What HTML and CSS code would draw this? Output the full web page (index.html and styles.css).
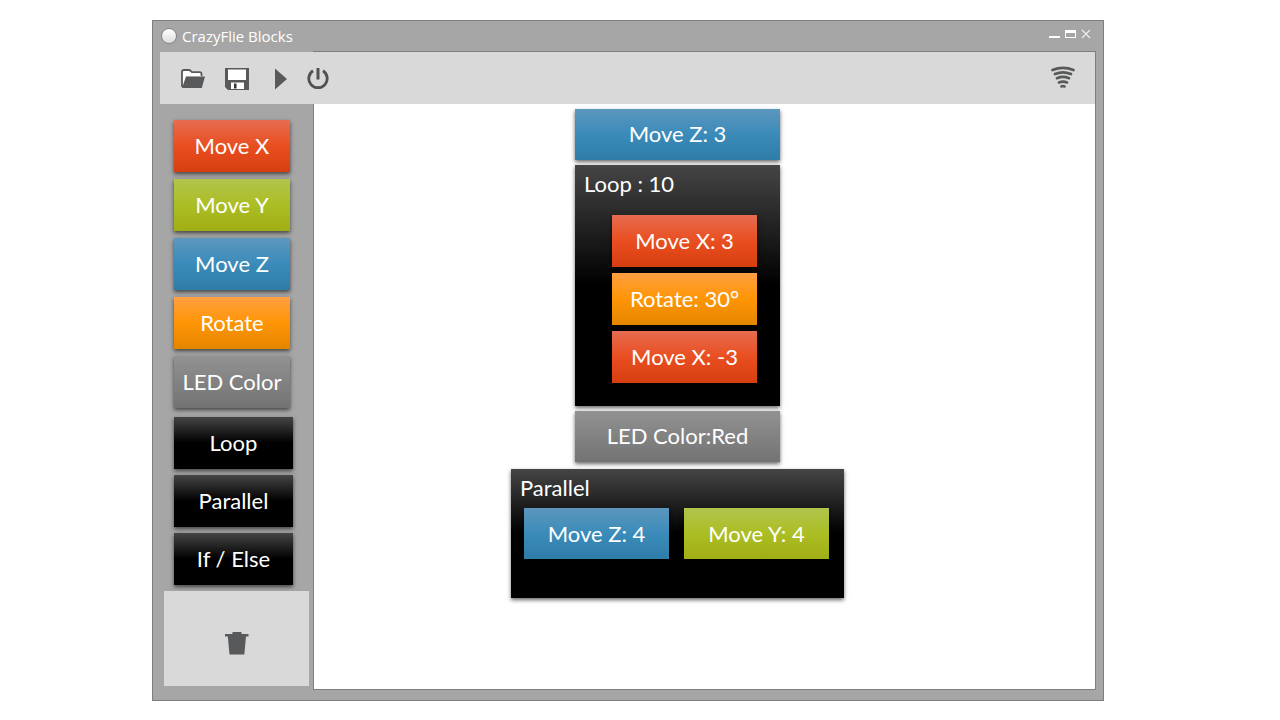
FILE: index.html
```html
<!DOCTYPE html>
<html lang="en">
<head>
<meta charset="utf-8">
<meta name="viewport" content="width=device-width, initial-scale=1">
<title>CrazyFlie Blocks</title>
<link rel="stylesheet" href="styles.css">
</head>
<body>
<div class="window">
  <header class="titlebar">
    <span class="app-dot"></span>
    <h1 class="app-title">CrazyFlie Blocks</h1>
    <div class="window-controls">
      <button class="icon-button" type="button" aria-label="Minimize">
        <svg width="11" height="10" viewBox="0 0 11 10"><path d="M0 7h11v2H0z" fill="#fff"/></svg>
      </button>
      <button class="icon-button" type="button" aria-label="Maximize">
        <svg width="11" height="10" viewBox="0 0 11 10"><path d="M0 1h11v8H0zM1 4v4h9V4z" fill="#fff" fill-rule="evenodd"/></svg>
      </button>
      <button class="icon-button" type="button" aria-label="Close">
        <svg width="10" height="10" viewBox="0 0 10 10"><path d="M1 1l8 8M9 1L1 9" stroke="#eee" stroke-width="1.1"/></svg>
      </button>
    </div>
  </header>

  <div class="toolbar">
    <button class="icon-button" type="button" aria-label="Open">
      <svg width="24" height="20" viewBox="0 0 24 20"><path d="M1 18V3.200Q1 1 3 1H8.500L11 3.200H18.500Q20.500 3.200 20.500 5V7.500H5.500L2 18Z" fill="#fff"/><path d="M1 18V3.200Q1 1 3 1H8.500L11 3.200H18.500Q20.500 3.200 20.500 5V7" fill="none" stroke="#58595b" stroke-width="1.800"/><path d="M5 7.500H24L20.800 19H1Z" fill="#58595b"/></svg>
    </button>
    <button class="icon-button" type="button" aria-label="Save">
      <svg width="24" height="22" viewBox="0 0 24 22"><path d="M0 0H24V22H3L0 19Z" fill="#58595b"/><path d="M3 1.500H21V12H3ZM6 14.500H19V21H6Z" fill="#fff"/><path d="M9 15.500H11.500V20.500H9Z" fill="#333"/></svg>
    </button>
    <button class="icon-button" type="button" aria-label="Run">
      <svg width="12" height="22" viewBox="0 0 12 22"><path d="M0 0.500L12 11L0 21.500Z" fill="#58595b"/></svg>
    </button>
    <button class="icon-button" type="button" aria-label="Power">
      <svg width="22" height="22" viewBox="0 0 22 22"><path d="M6 2.800A9.200 9.200 0 1 0 16 2.800" fill="none" stroke="#505153" stroke-width="2.800"/><path d="M11 0V11.500" stroke="#505153" stroke-width="3"/></svg>
    </button>
    <svg class="signal" role="img" aria-label="Connected" width="24" height="23" viewBox="0 0 24 23"><g fill="none" stroke="#58595b" stroke-width="2.700" stroke-linecap="round"><path d="M1.500 4Q12 -.300 22.500 4"/><path d="M4 8Q12 4.600 20 8"/><path d="M6 12.200Q12 9.700 18 12.200"/><path d="M8 16.400Q12 14.700 16 16.400"/><path d="M10.500 20.400Q12 19.700 13.500 20.400"/></g></svg>
  </div>

  <div class="workspace">
    <aside class="sidebar">
      <div class="palette">
        <button class="block red" type="button">Move X</button>
        <button class="block green" type="button">Move Y</button>
        <button class="block blue" type="button">Move Z</button>
        <button class="block orange" type="button">Rotate</button>
        <button class="block gray" type="button">LED Color</button>
      </div>
      <div class="palette palette-control">
        <button class="block black" type="button">Loop</button>
        <button class="block black" type="button">Parallel</button>
        <button class="block black" type="button">If / Else</button>
      </div>
      <button class="trash" type="button" aria-label="Delete block">
        <svg width="24" height="23" viewBox="0 0 24 23"><path d="M7.500 0H16.500V2H23.500V4.500H21L19.300 22.500H4.500L2.800 4.500H0V2H7.500Z" fill="#58595b"/></svg>
      </button>
    </aside>

    <main class="canvas">
      <div class="block step blue">Move Z: 3</div>
      <section class="group loop">
        <h2 class="group-title">Loop : 10</h2>
        <div class="block red">Move X: 3</div>
        <div class="block orange">Rotate: 30°</div>
        <div class="block red">Move X: -3</div>
      </section>
      <div class="block step gray">LED Color:Red</div>
      <section class="group parallel">
        <h2 class="group-title">Parallel</h2>
        <div class="branches">
          <div class="block blue">Move Z: 4</div>
          <div class="block green">Move Y: 4</div>
        </div>
      </section>
    </main>
  </div>
</div>
</body>
</html>
```
FILE: styles.css
```css
* {
  box-sizing: border-box;
}

body {
  margin: 0;
  min-height: 100vh;
  padding: 20px 176px 19px 152px;
  display: flex;
  background: #fff;
  color: #fff;
  font-family: Lato, "Open Sans", sans-serif;
}

svg {
  display: block;
}

h1,
h2 {
  margin: 0;
  font-weight: 400;
}

.window {
  flex: 1;
  display: flex;
  flex-direction: column;
  padding-bottom: 10px;
  background: #a6a6a6;
  border: 1px solid #7f7f7f;
}

.icon-button {
  padding: 0;
  border: 0;
  background: none;
  cursor: pointer;
}

.titlebar {
  display: flex;
  align-items: center;
  height: 31px;
  padding: 0 12px 2px 8px;
}

.app-dot {
  width: 16px;
  height: 16px;
  border: 1px solid #858585;
  border-radius: 50%;
  background: linear-gradient(#fff, #dcdcdc);
}

.app-title {
  margin-left: 5px;
  font-family: "Open Sans", "Noto Sans", sans-serif;
  font-size: 15px;
}

.window-controls {
  display: flex;
  gap: 5px;
  margin-left: auto;
  padding-bottom: 4px;
}

.toolbar {
  position: relative;
  display: flex;
  align-items: center;
  height: 52px;
  margin: 0 7px;
  padding: 2px 20px 0 21px;
  background: #d9d9d9;
  border-right: 1px solid #7f7f7f;
}

.toolbar::before {
  content: "";
  position: absolute;
  top: -1px;
  left: 153px;
  right: -1px;
  height: 1px;
  background: #7f7f7f;
}

.toolbar .icon-button {
  margin-right: 20px;
}

.toolbar .icon-button:nth-child(2) {
  margin-right: 26px;
}

.signal {
  margin-left: auto;
  margin-bottom: 4px;
}

.workspace {
  flex: 1;
  display: flex;
  padding-right: 7px;
}

.sidebar {
  flex: 0 0 160px;
  display: flex;
  flex-direction: column;
  padding-top: 16px;
}

.palette {
  display: flex;
  flex-direction: column;
  gap: 7px;
  padding: 0 23px 0 21px;
}

.palette-control {
  gap: 6px;
  padding: 9px 20px 6px 21px;
}

.block {
  display: flex;
  align-items: center;
  justify-content: center;
  height: 52px;
  padding: 0;
  border: 0;
  box-shadow: 0 2px 4px rgba(0, 0, 0, 0.6);
  color: #fff;
  font-family: inherit;
  font-size: 22px;
  line-height: 28px;
  white-space: nowrap;
}

.red {
  background: linear-gradient(#e66c50, #e94e20 50%, #d63e10);
}

.green {
  background: linear-gradient(#b2c44e, #abbe23 50%, #9fae14);
}

.blue {
  background: linear-gradient(#5c97be, #3b8bba 50%, #2e7ca8);
}

.orange {
  background: linear-gradient(#ffa043, #ff9505 50%, #e48500);
}

.gray {
  background: linear-gradient(#929292, #828282 50%, #737373);
}

.black {
  background: linear-gradient(#454545, #000 50%);
}

.trash {
  display: flex;
  align-items: center;
  justify-content: center;
  height: 95px;
  margin: 0 4px 4px 11px;
  padding: 10px 0 0;
  border: 0;
  background: #d9d9d9;
}

.canvas {
  flex: 1;
  display: flex;
  flex-direction: column;
  align-items: center;
  gap: 5px;
  padding: 5px 54px 16px 0;
  background: #fff;
  border: 1px solid #7f7f7f;
  border-top: 0;
}

.step {
  width: 205px;
  height: 51px;
  padding-bottom: 2px;
}

.group {
  display: flex;
  flex-direction: column;
  background: linear-gradient(#454545, #000 50%);
  box-shadow: 0 2px 4px rgba(0, 0, 0, 0.6);
}

.group-title {
  font-size: 22px;
  line-height: 28px;
}

.loop {
  gap: 6px;
  width: 205px;
  padding: 5px 23px 23px 37px;
}

.loop .group-title {
  margin: 0 0 11px -28px;
}

.parallel {
  width: 333px;
  margin-top: 2px;
  padding: 5px 15px 39px 13px;
}

.parallel .group-title {
  margin: 0 0 6px -4px;
}

.branches {
  display: grid;
  grid-template-columns: 1fr 1fr;
  gap: 15px;
}

.branches .block {
  height: 51px;
}
```
